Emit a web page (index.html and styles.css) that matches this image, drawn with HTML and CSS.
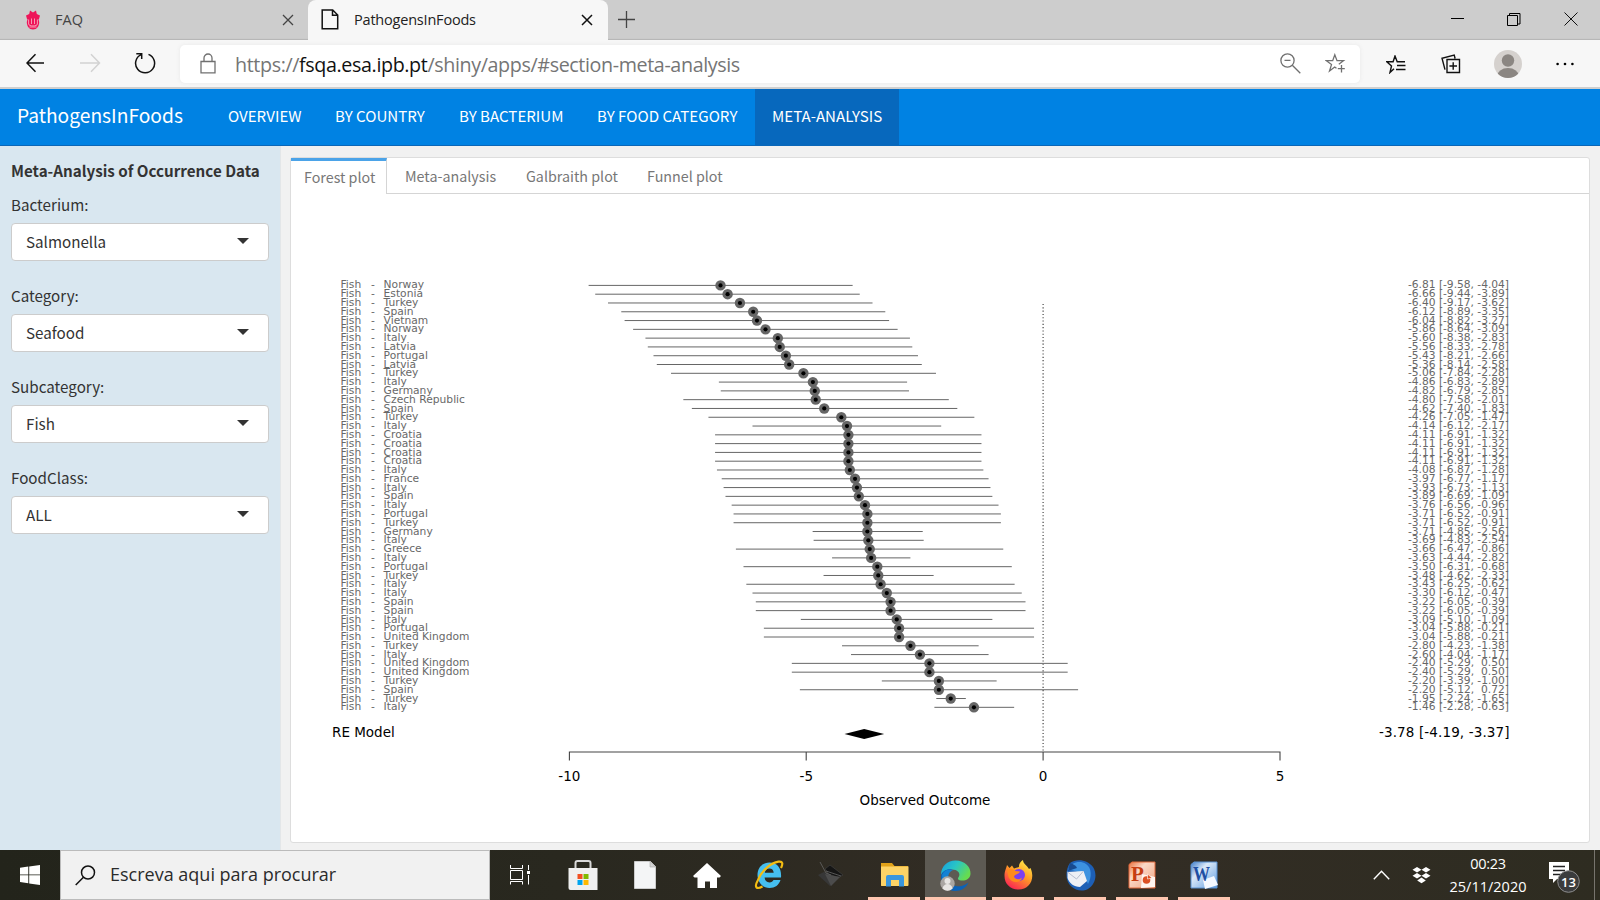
FILE: index.html
```
<!DOCTYPE html>
<html lang="en">
<head>
<meta charset="utf-8">
<title>PathogensInFoods</title>
<link rel="stylesheet" href="styles.css">
</head>
<body>
<div class="screen">
  <header class="tabstrip">
    <div class="btab btab-idle">
      <svg class="fav" width="16" height="20" viewBox="0 0 16 20"><path d="M5 .5l3 2 3-2 .8 3.500L15 5.500 14 9l-.5 0 .7 3c0 4-2.200 7.500-6.200 7.500S1.800 16 1.800 12l.7-3H2L1 5.500 4.200 4z" fill="#ee1459"/><path d="M3.600 9.500v4.500c0 2.600 8.800 2.600 8.800 0V9.500M6.500 8.500v5.500M9.500 8.500v5.500M4.500 17h7" stroke="#f8a9bd" stroke-width=".9" fill="none"/></svg>
      <span class="btab-name">FAQ</span>
      <svg class="x" width="12" height="12" viewBox="0 0 12 12"><path d="M1 1l10 10M11 1L1 11" stroke="#444" stroke-width="1.300"/></svg>
    </div>
    <div class="btab btab-active">
      <svg class="page" width="18" height="21" viewBox="0 0 18 21"><path d="M1.200 1h10.500l5 5v13.800H1.200zM11.500 1v5.200h5" fill="none" stroke="#111" stroke-width="1.500"/></svg>
      <span class="btab-name">PathogensInFoods</span>
      <svg class="x" width="12" height="12" viewBox="0 0 12 12"><path d="M1 1l10 10M11 1L1 11" stroke="#111" stroke-width="1.500"/></svg>
    </div>
    <svg class="plus" width="17" height="17" viewBox="0 0 17 17"><path d="M8.500 0v17M0 8.500h17" stroke="#444" stroke-width="1.300"/></svg>
    <div class="winctl">
      <svg width="13" height="14" viewBox="0 0 13 14"><path d="M0 6.500h13" stroke="#000"/></svg>
      <svg width="14" height="14" viewBox="0 0 14 14"><path d="M.5 3.500h10v10H.5zM2.500 3.500v-2h10.500v10.500h-2.500" fill="none" stroke="#000"/></svg>
      <svg width="14" height="14" viewBox="0 0 14 14"><path d="M.5.500l13 13M13.500.500l-13 13" stroke="#111"/></svg>
    </div>
  </header>

  <div class="toolbar">
    <div class="navbtns">
      <svg width="18" height="20" viewBox="0 0 18 20"><path d="M18 10H1.500M9.500 1.200L1 10l8.500 8.800" fill="none" stroke="#111" stroke-width="1.500"/></svg>
      <svg width="21" height="20" viewBox="0 0 21 20"><path d="M0 10h19.500M11 1.200l8.500 8.800-8.500 8.800" fill="none" stroke="#d2d2d2" stroke-width="1.500"/></svg>
      <svg width="22" height="22" viewBox="0 0 22 22"><path d="M7.200 2.600A9.500 9.500 0 1 0 14.500 2.400M2.300 1.800h5.400v5.300" fill="none" stroke="#111" stroke-width="1.500"/></svg>
    </div>
    <div class="address">
      <svg class="lock" width="16" height="21" viewBox="0 0 16 21"><path d="M1 8.500h14v11.300H1zM4 8.500V5a4 4 0 0 1 8 0v3.500" fill="none" stroke="#707070" stroke-width="1.300"/></svg>
      <span class="url">https://<b>fsqa.esa.ipb.pt</b>/shiny/apps/#section-meta-analysis</span>
      <svg class="mag" width="21" height="21" viewBox="0 0 21 21"><circle cx="7.500" cy="7.500" r="6.600" fill="none" stroke="#707070" stroke-width="1.300"/><path d="M4.500 7.300h6M12.300 12.300l8 8" stroke="#707070" stroke-width="1.300"/></svg>
      <svg class="staradd" width="21" height="21" viewBox="0 0 21 21"><path d="M11.500 15.300l-1.800-1.200-5.200 4 2-6.500L1.300 7.700h6.400L9.800 1.800l2.200 5.900h6.500l-4.700 3.600M16.500 12v7.500M12.800 15.700h7" fill="none" stroke="#707070" stroke-width="1.300"/></svg>
    </div>
    <div class="actions">
      <svg width="20" height="19" viewBox="0 0 20 19"><path d="M8 13.800L4 17.500l1.500-6.500L.8 6.700h6.300L9 1l2.200 5.700H19M11 10.500h8.500M10 14.500h9.500" fill="none" stroke="#111" stroke-width="1.400"/></svg>
      <svg width="20" height="20" viewBox="0 0 20 20"><path d="M6 5.500h12.500v13H6zM12.200 8.200v7.600M8.400 12h7.600M4 15.600L1 4.200 13.200 1l.9 3.500" fill="none" stroke="#111" stroke-width="1.400"/></svg>
      <svg width="28" height="28" viewBox="0 0 28 28"><defs><clipPath id="av"><circle cx="14" cy="14" r="14"/></clipPath></defs><g clip-path="url(#av)"><path d="M0 0h28v28H0z" fill="#d5d1ce"/><circle cx="14" cy="10.500" r="6.200" fill="#8b8682"/><ellipse cx="14" cy="26.500" rx="11" ry="8.500" fill="#8b8682"/></g></svg>
      <svg width="18" height="4" viewBox="0 0 18 4"><circle cx="1.600" cy="2" r="1.300"/><circle cx="9" cy="2" r="1.300"/><circle cx="16.400" cy="2" r="1.300"/></svg>
    </div>
  </div>

  <nav class="appnav">
    <span class="brand">PathogensInFoods</span>
    <a class="w1">OVERVIEW</a><a class="w2">BY COUNTRY</a><a class="w3">BY BACTERIUM</a><a class="w4">BY FOOD CATEGORY</a><a class="w5 on">META-ANALYSIS</a>
  </nav>

  <main class="app">
    <aside class="side">
      <h1>Meta-Analysis of Occurrence Data</h1>
      <div class="field"><label>Bacterium:</label><div class="select">Salmonella<i></i></div></div>
      <div class="field"><label>Category:</label><div class="select">Seafood<i></i></div></div>
      <div class="field"><label>Subcategory:</label><div class="select">Fish<i></i></div></div>
      <div class="field"><label>FoodClass:</label><div class="select">ALL<i></i></div></div>
    </aside>
    <section class="content">
      <div class="panel">
        <div class="ptabs">
          <span class="ptab sel">Forest plot</span><span class="ptab p2">Meta-analysis</span><span class="ptab p3">Galbraith plot</span><span class="ptab p4">Funnel plot</span>
        </div>
        <svg id="plot" class="plot" width="1297" height="647" viewBox="292 194 1297 647"></svg>
      </div>
    </section>
  </main>

  <footer class="taskbar">
    <div class="start"><svg width="20" height="20" viewBox="0 0 20 20"><path d="M0 2.800L8.300 1.600v7.800H0zM9.200 1.500L20 0v9.400H9.200zM0 10.300h8.300v7.900L0 17zM9.200 10.300H20V20L9.200 18.400z" fill="#fff"/></svg></div>
    <div class="search"><svg width="21" height="21" viewBox="0 0 21 21"><circle cx="13" cy="7.500" r="6.500" fill="none" stroke="#111" stroke-width="1.500"/><path d="M8.500 12.200L.7 20" stroke="#111" stroke-width="1.500"/></svg><span>Escreva aqui para procurar</span></div>
    <div class="apps">
      <div class="slot first"><svg width="20" height="20" viewBox="0 0 20 20"><path d="M.5 0v3.500h12V0M.5 5.500h12v9H.5zM.5 19.500v-3h12v3M18.500 0v5M18.500 10v9.500" fill="none" stroke="#fff"/><path d="M17 6h3v3h-3z" fill="#fff"/></svg></div>
      <div class="slot"><svg width="30" height="30" viewBox="0 0 30 30"><path d="M7.500 9V3a2 2 0 0 1 2-2h11a2 2 0 0 1 2 2v6" fill="none" stroke="#d9d9d9" stroke-width="2"/><path d="M.5 8h29v22H2.500a2 2 0 0 1-2-2z" fill="#f0f0f0"/><path d="M9.500 14h5v5h-5z" fill="#f25022"/><path d="M15.500 14h5v5h-5z" fill="#7fba00"/><path d="M9.500 20h5v5h-5z" fill="#00a4ef"/><path d="M15.500 20h5v5h-5z" fill="#ffb900"/></svg></div>
      <div class="slot"><svg width="22" height="28" viewBox="0 0 22 28"><path d="M.5.500h16l5 5v22H.5z" fill="#f4f5f6" stroke="#ccc"/><path d="M16 .5v5.500h5.500z" fill="#d5d5d5" stroke="#aaa" stroke-width=".6"/></svg></div>
      <div class="slot"><svg width="28" height="25" viewBox="0 0 28 25"><path d="M14 0l14 13-1.500 1.500H24V25h-7v-6.500h-5V25H4.500V14.500h-3L0 13z" fill="#fff"/></svg></div>
      <div class="slot"><svg width="30" height="30" viewBox="0 0 30 30"><path d="M15.500 2.500C8 2.500 3.500 8 3.500 15s5 13 12 13c5.500 0 9.500-3 11-8h-7c-.8 1.700-2 2.400-4 2.400-3 0-4.700-1.800-4.900-4.900H27C27.800 8.500 23.500 2.500 15.500 2.500zM10.800 12.700c.4-2.800 2-4.300 4.600-4.300s4.100 1.500 4.300 4.300z" fill="#45bff0"/><path d="M4 20C-.5 28 3 29.500 8.500 26.500M4 20C8 10 17 3 24.500 1.700c4.500-.7 4.500 2.300 2.500 6.300" fill="none" stroke="#f3bd13" stroke-width="2.200"/></svg></div>
      <div class="slot"><svg width="28" height="26" viewBox="0 0 28 26"><path d="M8 7l5-4 13 10-4 2-9-1z" fill="#151515" stroke="#444" stroke-width=".6"/><path d="M1 13l6-3 11 4-3 9-2 1z" fill="#373737"/><path d="M8 12l15 3-9 9z" fill="#4c4c4c"/><path d="M3 0l6 11 5 2M9 9l15 5" stroke="#666" stroke-width=".8" fill="none"/></svg></div>
      <div class="slot run wide"><svg width="29" height="24" viewBox="0 0 29 24"><path d="M1 0h11l2.500 3H28v20H1z" fill="#e0a119"/><path d="M1 3.500h27.500V22a1 1 0 0 1-1 1H2a1 1 0 0 1-1-1z" fill="#fdd366"/><path d="M6 23.500V14a2 2 0 0 1 2-2h14a2 2 0 0 1 2 2v9.500h-5V17h-8v6.500z" fill="#3a96dd"/></svg></div>
      <div class="slot run cur"><svg width="31" height="31" viewBox="0 0 31 31"><defs><linearGradient id="eg" x1="0" y1="0" x2="1" y2=".5"><stop offset="0" stop-color="#159ce5"/><stop offset=".5" stop-color="#29c5c5"/><stop offset="1" stop-color="#66dc50"/></linearGradient></defs><path d="M1 15C1 6 7.500.5 15.500.5 25 .5 31 7 30.500 14c-.4 5-5 7-9.500 6.500-3.500-.4-3.500-2-2.300-3.500 2.500-4-1.700-7.500-6.700-7.500C6.500 9.500 2 12 1 15z" fill="url(#eg)"/><path d="M1 16c1-5 6-7.500 11-6.500-4 2-5.500 6.500-3.500 11 2 4.500 8 6.700 13 5.500 3-.7 5-2 7-3.500C26 28 21 31 15.500 31 7 31 .5 24 1 16z" fill="#0b62b8"/><path d="M2 15c2-5 7-6.500 11-5-4 2-5.500 5.500-4.500 10L3 24z" fill="#1382d5"/><circle cx="7.500" cy="23.500" r="7.200" fill="#aaa6a3"/><circle cx="7.500" cy="21" r="3" fill="#e7e5e3"/><path d="M2.500 28.500c1-6 9-6 10 0-3 3-7 3-10 0z" fill="#e7e5e3"/></svg></div>
      <div class="slot run"><svg width="29" height="30" viewBox="0 0 29 30"><defs><linearGradient id="fg" x1=".8" y1="0" x2=".2" y2="1"><stop offset="0" stop-color="#fff04a"/><stop offset=".45" stop-color="#ff9a26"/><stop offset="1" stop-color="#fa1b57"/></linearGradient></defs><path d="M.5 16C.5 11 2 9 3 5l2.500 3L8 5.500l2 3L15 7c-.5-3 2-6 4-7 0 4 4 5 6 9l1.500-1c5 11-1 21.500-12 21.500C6.500 29.500.5 24 .5 16z" fill="url(#fg)"/><circle cx="15" cy="15" r="6" fill="#7b3ff0"/><path d="M3 10c3-2 6-1 8 1l5 .5c-1 3-5 2.500-6 5 1 3.500 6 3.500 8 1-1 6-11 6-13.500-.5z" fill="#ff8a1c"/></svg></div>
      <div class="slot run"><svg width="31" height="31" viewBox="0 0 31 31"><path d="M5 3C12-2 23 0 28 7c5 8 2 18-5 22-6 3-13 1-16-2-7-5-7-17-2-24z" fill="#1d5fb5"/><path d="M3 10C6 2 15 0 21 4c6 4 6 13 2 20-3-8-9-14-20-14z" fill="#3d92e0"/><path d="M2.500 12l16-1 3.500 10-7 6c-6 0-11-4-12.500-9z" fill="#eef0f5"/><path d="M2.500 12l9 7 7-8" fill="none" stroke="#b7bed0"/><path d="M5 3c4 1 6 3 7 5L3 11z" fill="#174a8f"/></svg></div>
      <div class="slot run"><svg width="28" height="28" viewBox="0 0 28 28"><defs><linearGradient id="pg" x1="0" y1="0" x2="1" y2="1"><stop offset="0" stop-color="#e8703c"/><stop offset=".35" stop-color="#fbd9c8"/><stop offset="1" stop-color="#f0a37f"/></linearGradient></defs><path d="M1 3.500L4 1h23v26H1z" fill="url(#pg)" stroke="#e1683b"/><path d="M14 13l13 3v10l-14 1z" fill="#fff5ef"/><circle cx="18.500" cy="19" r="3.800" fill="#dc5124"/><path d="M19.500 18v-5l4.500 4z" fill="#dc5124" stroke="#fff" stroke-width=".6"/><text class="off" x="3" y="20" fill="#c63d12">P</text></svg></div>
      <div class="slot run"><svg width="28" height="28" viewBox="0 0 28 28"><defs><linearGradient id="wg" x1="0" y1="0" x2="1" y2="1"><stop offset="0" stop-color="#3f7cc8"/><stop offset=".35" stop-color="#dbe9f8"/><stop offset="1" stop-color="#5f9ce0"/></linearGradient></defs><path d="M1 3.500L4 1h23v26H1z" fill="url(#wg)" stroke="#5b92d2"/><path d="M13 19l11-4 4 9-13 4z" fill="#f5f9ff"/><text class="off w" x="3" y="20" textLength="17" lengthAdjust="spacingAndGlyphs" fill="#1f4fa3">W</text></svg></div>
    </div>
    <div class="tray">
      <svg class="chev" width="17" height="10" viewBox="0 0 17 10"><path d="M.8 9.200L8.500 1.200l7.700 8" fill="none" stroke="#fff" stroke-width="1.400"/></svg>
      <svg class="drop" width="19" height="17" viewBox="0 0 19 17"><path d="M5 0l4.500 2.800L5 5.600.5 2.800zM14 0l4.500 2.800L14 5.600 9.500 2.800zM5 5.900l4.500 2.800L5 11.500.5 8.700zM14 5.900l4.500 2.800-4.500 2.800-4.500-2.800zM9.500 10.600l4.300 2.800-4.300 2.900-4.300-2.900z" fill="#fff"/></svg>
      <div class="clock"><span>00:23</span><span>25/11/2020</span></div>
      <svg class="note" width="32" height="31" viewBox="0 0 32 31"><path d="M0 0h20v17H8l-4 4v-4H0z" fill="#fff"/><path d="M4 4.500h12M4 8.500h12M4 12.500h8" stroke="#222" stroke-width="1.300"/><circle cx="19.500" cy="19.500" r="10.800" fill="#3b3c3d" stroke="#8d8d8d"/><text class="cnt" x="19.500" y="24.500" text-anchor="middle" fill="#fff">13</text></svg>
      <span class="edge"></span>
    </div>
  </footer>
</div>
<script src="plot.js"></script>
</body>
</html>
```
FILE: styles.css
```
* { box-sizing: border-box; }
body { margin: 0; overflow: hidden; }
.screen { width: 1600px; height: 900px; display: flex; flex-direction: column; font-family: "Noto Sans CJK JP", "Noto Sans", sans-serif; }
svg { display: block; flex: none; }

/* browser chrome */
.tabstrip { height: 40px; background: #cdcdcd; display: flex; align-items: center; font-family: "Open Sans", sans-serif; font-size: 14.500px; box-shadow: inset 0 -2px 1px -1px #b5b5b5; }
.btab { height: 40px; display: flex; align-items: center; padding-bottom: 1px; }
.btab-idle { width: 308px; padding-left: 25px; padding-right: 14px; color: #444; }
.btab-idle .btab-name { margin-left: 14px; }
.btab-active { width: 300px; background: #f7f7f7; border-radius: 8px 8px 0 0; padding: 0 15px 1px 13px; color: #222; }
.btab-active .btab-name { margin-left: 15px; letter-spacing: -.2px; }
.btab .x { margin-left: auto; }
.plus { margin-left: 10px; margin-bottom: 2px; }
.winctl { margin-left: auto; display: flex; gap: 43px; padding-right: 22px; padding-bottom: 3px; }
.toolbar { height: 47px; flex: none; background: #f7f7f7; display: flex; align-items: center; }
.navbtns { width: 180px; display: flex; align-items: center; padding-left: 26px; padding-bottom: 1px; }
.navbtns svg:nth-child(2) { margin-left: 36px; }
.navbtns svg:nth-child(3) { margin-left: 33px; }
.address { width: 1180px; height: 38px; background: #fff; border-radius: 5px; display: flex; align-items: center; padding: 0 14px 0 20px; box-shadow: 0 0 4px #e8e8e8; }
.url { margin-left: 19px; padding-top: 1px; font: 19.700px "Open Sans", sans-serif; color: #757575; white-space: nowrap; letter-spacing: -.38px; }
.url b { font-weight: 400; color: #111; }
.mag { margin-left: auto; margin-right: -1px; }
.staradd { margin-left: 25px; }
.actions { flex: 1; display: flex; align-items: center; padding-left: 26px; }
.actions svg { margin-top: 1px; }
.actions svg:nth-child(2) { margin-left: 35px; }
.actions svg:nth-child(3) { margin-left: 33px; }
.actions svg:nth-child(4) { margin-left: 34px; }

/* application navbar */
.appnav { height: 59px; flex: none; background: #0082e3; border-top: 2px solid #cfcfcf; border-bottom: 1px solid #0b67b8; display: flex; color: #fff; font-size: 15.100px; line-height: 53px; white-space: nowrap; }
.brand { width: 211px; padding-left: 17px; font-size: 19.200px; }
.appnav a { padding-left: 17px; }
.w1 { width: 107px; } .w2 { width: 124px; } .w3 { width: 138px; } .w4 { width: 175px; } .w5 { width: 144px; }
.appnav .on { background: #0768bd; }

/* page body */
.app { flex: 1; display: flex; min-height: 0; }
.side { width: 281px; background: #d9e7f0; border-right: 1px solid #e3e6e8; padding: 12px 11px 0; color: #333; }
.side h1 { margin: 0 0 11px; font-size: 15.200px; line-height: 24px; font-weight: 700; white-space: nowrap; }
.field { height: 91px; font-size: 15.200px; }
.field label { display: block; height: 30px; line-height: 22px; }
.select { height: 38px; width: 258px; background: #fff; border: 1px solid #ccc; border-radius: 4px; display: flex; align-items: center; justify-content: space-between; padding: 0 19px 2px 14px; line-height: 34px; }
.select i { border: 6px solid transparent; border-top: 6px solid #333; border-bottom: 0; }
.content { flex: 1; background: #f1f1f1; padding: 11px 9px 7px 9px; }
.panel { width: 1300px; height: 686px; background: #fff; border: 1px solid #ddd; border-radius: 3px; }
.ptabs { height: 36px; display: flex; border-bottom: 1px solid #d5d5d5; color: #777; font-size: 14.300px; line-height: 35px; white-space: nowrap; }
.ptab.sel { width: 96px; height: 36px; padding-left: 13px; border-top: 3px solid #4ba3e8; border-right: 1px solid #d5d5d5; background: #fff; line-height: 32px; }
.p2 { width: 121px; padding-left: 18px; }
.p3 { width: 122px; padding-left: 18px; }
.p4 { padding-left: 17px; }

/* forest plot */
.plot { font-family: "DejaVu Sans", sans-serif; margin-left: 1px; }
.plot text { white-space: pre; }
.row { font-size: 10.700px; fill: #686868; }
.big { font-size: 13.500px; fill: #000; }

/* taskbar */
.taskbar { height: 50px; flex: none; display: flex; background: linear-gradient(90deg, #23241b, #29281f 35%, #332d25 65%, #2e2c21); font-family: "Open Sans", sans-serif; }
.start { width: 60px; display: flex; align-items: center; justify-content: center; }
.search { width: 430px; background: #f1f1f1; border: 1px solid #bbb; display: flex; align-items: center; padding-left: 14px; font-size: 18px; color: #2b2b2b; white-space: nowrap; }
.search span { margin-left: 14px; padding-bottom: 2px; }
.apps { display: flex; }
.slot { width: 62px; height: 50px; display: flex; align-items: center; justify-content: center; border-bottom: 3px solid transparent; padding-top: 3px; background-clip: padding-box; }
.slot.first { padding-right: 3px; }
.slot.run { width: 52px; margin: 0 5px; border-color: #ffc6b0; }
.slot.run.wide { margin: 0 5px 0 6px; }
.slot.cur { width: 61px; margin: 0 1px 0 0; background-color: #5d5a53; }
.off { font: 700 21px "Liberation Serif", serif; }
.off.w { font-size: 20px; }
.tray { flex: 1; display: flex; align-items: center; color: #fff; }
.chev { margin-left: 138px; }
.drop { margin-left: 22px; }
.clock { width: 118px; padding-right: 4px; display: flex; flex-direction: column; align-items: center; font-size: 14.500px; line-height: 23px; letter-spacing: -.3px; }
.clock span:last-child { letter-spacing: 0; }
.note { margin-top: 5px; }
.cnt { font: 600 13px "Open Sans", sans-serif; }
.edge { width: 1px; height: 50px; background: #77746d; margin-left: auto; margin-right: 5px; }
```
FILE: plot.js
```
const data = `Norway -6.81 -9.58 -4.04
Estonia -6.66 -9.44 -3.89
Turkey -6.40 -9.17 -3.62
Spain -6.12 -8.89 -3.35
Vietnam -6.04 -8.82 -3.27
Norway -5.86 -8.64 -3.09
Italy -5.60 -8.38 -2.83
Latvia -5.56 -8.33 -2.78
Portugal -5.43 -8.21 -2.66
Latvia -5.36 -8.14 -2.58
Turkey -5.06 -7.84 -2.28
Italy -4.86 -6.83 -2.89
Germany -4.82 -6.79 -2.85
Czech_Republic -4.80 -7.58 -2.01
Spain -4.62 -7.40 -1.83
Turkey -4.26 -7.05 -1.47
Italy -4.14 -6.12 -2.17
Croatia -4.11 -6.91 -1.32
Croatia -4.11 -6.91 -1.32
Croatia -4.11 -6.91 -1.32
Croatia -4.11 -6.91 -1.32
Italy -4.08 -6.87 -1.28
France -3.97 -6.77 -1.17
Italy -3.93 -6.73 -1.13
Spain -3.89 -6.69 -1.09
Italy -3.76 -6.56 -0.96
Portugal -3.71 -6.52 -0.91
Turkey -3.71 -6.52 -0.91
Germany -3.71 -4.85 -2.56
Italy -3.69 -4.83 -2.54
Greece -3.66 -6.47 -0.86
Italy -3.63 -4.44 -2.82
Portugal -3.50 -6.31 -0.68
Turkey -3.48 -4.62 -2.33
Italy -3.43 -6.25 -0.62
Italy -3.30 -6.12 -0.47
Spain -3.22 -6.05 -0.39
Spain -3.22 -6.05 -0.39
Italy -3.09 -5.10 -1.09
Portugal -3.04 -5.88 -0.21
United_Kingdom -3.04 -5.88 -0.21
Turkey -2.80 -4.23 -1.38
Italy -2.60 -4.04 -1.17
United_Kingdom -2.40 -5.29 0.50
United_Kingdom -2.40 -5.29 0.50
Turkey -2.20 -3.39 -1.00
Spain -2.20 -5.12 0.72
Turkey -1.95 -2.24 -1.65
Italy -1.46 -2.28 -0.63`.split('\n').map(l => l.split(' '));

const X = v => 1043.1 + 47.37 * v;
let out = `<path d="M1043.100 304V752" stroke="#333" stroke-width="1.100" stroke-dasharray="1.100 2.200"/>`;
data.forEach(([name, est, lo, hi], i) => {
  const y = 285.4 + 8.79 * i;
  const base = Math.ceil(288 + 8.79 * i - 0.001);
  const hiText = hi[0] === '-' ? hi : '\u00a0' + hi;
  out += `<path d="M${X(+lo) - 0.7} ${y}H${X(+hi) + 0.9}" stroke="#666" stroke-width="1"/>`;
  out += `<circle cx="${X(+est)}" cy="${y}" r="5.200" fill="#666"/><circle cx="${X(+est)}" cy="${y}" r="2.100"/>`;
  out += `<text class="row" y="${base}"><tspan x="340.500">Fish  </tspan><tspan x="367.700"> - </tspan><tspan x="383.600">${name.replace('_', ' ')}</tspan></text>`;
  out += `<text class="row" x="1509" y="${base}" text-anchor="end" textLength="101">${est} [${lo}, ${hiText}]</text>`;
});
out += `<path d="M844.500 734l19.700-5 20 5-20 5z"/>`;
out += `<path d="M569.400 760.500V752H1280V760.500M806.200 752v8.500M1043.100 752v8.500" fill="none" stroke="#444" stroke-width="1.100"/>`;
out += `<text class="big" x="332" y="737">RE Model</text><text class="big" x="1509.500" y="737" text-anchor="end" textLength="130.500">-3.78 [-4.19, -3.37]</text>`;
[-10, -5, 0, 5].forEach(v => { out += `<text class="big" x="${X(v)}" y="781" text-anchor="middle">${v}</text>`; });
out += `<text class="big" x="925" y="805" text-anchor="middle">Observed Outcome</text>`;
document.getElementById('plot').innerHTML = out;
```
